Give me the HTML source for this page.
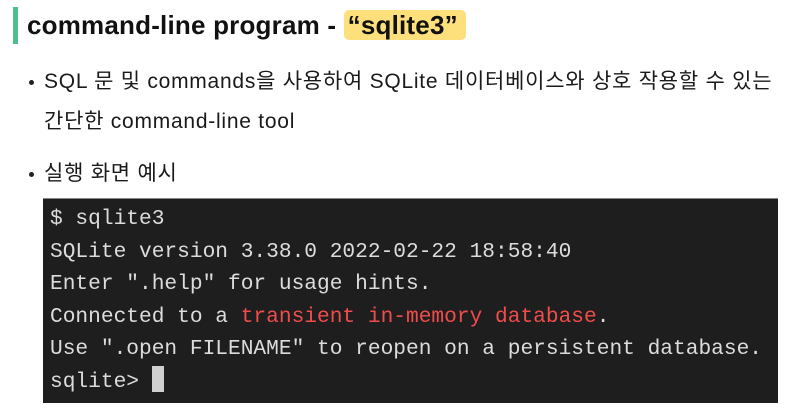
<!DOCTYPE html>
<html><head><meta charset="utf-8"><style>
body{margin:0;width:802px;height:409px;background:#fff;position:relative;overflow:hidden;font-family:"Liberation Sans","Noto Sans CJK KR",sans-serif;color:#111}
.bar{position:absolute;left:13px;top:7px;width:5px;height:37px;background:#4cbf8a}
.title{position:absolute;left:27px;top:6px;font-size:26px;font-weight:bold;line-height:38px;white-space:nowrap;letter-spacing:0.2px}
.hl{background:#fde07c;border-radius:5px;padding:0 8px 0 4px}
.p{position:absolute;left:44px;font-size:21px;line-height:28px;white-space:nowrap;letter-spacing:0.75px;color:#1a1a1a}
.dot{position:absolute;left:29px;width:5px;height:5px;border-radius:50%;background:#222}
.term{position:absolute;left:43px;top:198px;width:735px;height:204px;background:#1e1e1e;border-top:1px solid #888}
.term pre{margin:0;position:absolute;left:7px;top:4px;font-family:"Liberation Mono",monospace;font-size:21.2px;line-height:32.6px;color:#dcdcdc}
.r{color:#f14c4c}
.cur{display:inline-block;width:12px;height:26px;background:#d0d0d0;vertical-align:-5px}
</style></head><body>
<div class="bar"></div>
<div class="title">command-line program - <span class="hl">“sqlite3”</span></div>
<div class="dot" style="top:80px"></div>
<div class="p" style="top:68px">SQL 문 및 commands을 사용하여 SQLite 데이터베이스와 상호 작용할 수 있는</div>
<div class="p" style="top:108px">간단한 command-line tool</div>
<div class="dot" style="top:172px"></div>
<div class="p" style="top:160px">실행 화면 예시</div>
<div class="term"><pre>$ sqlite3
SQLite version 3.38.0 2022-02-22 18:58:40
Enter ".help" for usage hints.
Connected to a <span class="r">transient in-memory database</span>.
Use ".open FILENAME" to reopen on a persistent database.
sqlite&gt; <span class="cur"></span></pre></div>
</body></html>
